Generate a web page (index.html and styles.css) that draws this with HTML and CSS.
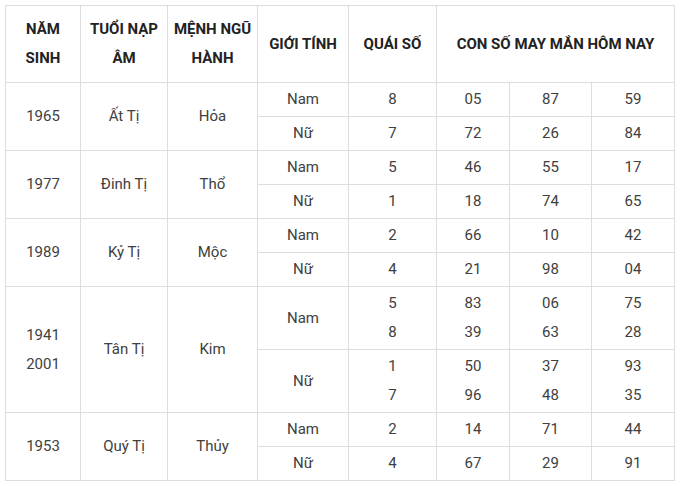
FILE: index.html
```html
<!DOCTYPE html>
<html lang="vi">
<head>
<meta charset="utf-8">
<link rel="stylesheet" href="styles.css">
</head>
<body>
<div class="wrap">
<table class="lucky">
  <colgroup>
    <col class="c1"><col class="c2"><col class="c3"><col class="c4"><col class="c5"><col class="c6"><col class="c7"><col class="c8">
  </colgroup>
  <thead>
    <tr>
      <th>NĂM<br>SINH</th>
      <th>TUỔI NẠP<br>ÂM</th>
      <th>MỆNH NGŨ<br>HÀNH</th>
      <th>GIỚI TÍNH</th>
      <th>QUÁI SỐ</th>
      <th colspan="3">CON SỐ MAY MẮN HÔM NAY</th>
    </tr>
  </thead>
  <tbody>
    <tr class="r1"><td rowspan="2">1965</td><td rowspan="2">Ất Tị</td><td rowspan="2">Hỏa</td><td>Nam</td><td>8</td><td>05</td><td>87</td><td>59</td></tr>
    <tr class="r1"><td>Nữ</td><td>7</td><td>72</td><td>26</td><td>84</td></tr>
    <tr class="r1"><td rowspan="2">1977</td><td rowspan="2">Đinh Tị</td><td rowspan="2">Thổ</td><td>Nam</td><td>5</td><td>46</td><td>55</td><td>17</td></tr>
    <tr class="r1"><td>Nữ</td><td>1</td><td>18</td><td>74</td><td>65</td></tr>
    <tr class="r1"><td rowspan="2">1989</td><td rowspan="2">Kỷ Tị</td><td rowspan="2">Mộc</td><td>Nam</td><td>2</td><td>66</td><td>10</td><td>42</td></tr>
    <tr class="r1"><td>Nữ</td><td>4</td><td>21</td><td>98</td><td>04</td></tr>
    <tr class="r2"><td rowspan="2">1941<br>2001</td><td rowspan="2">Tân Tị</td><td rowspan="2">Kim</td><td>Nam</td><td>5<br>8</td><td>83<br>39</td><td>06<br>63</td><td>75<br>28</td></tr>
    <tr class="r2"><td>Nữ</td><td>1<br>7</td><td>50<br>96</td><td>37<br>48</td><td>93<br>35</td></tr>
    <tr class="r1"><td rowspan="2">1953</td><td rowspan="2">Quý Tị</td><td rowspan="2">Thủy</td><td>Nam</td><td>2</td><td>14</td><td>71</td><td>44</td></tr>
    <tr class="r1"><td>Nữ</td><td>4</td><td>67</td><td>29</td><td>91</td></tr>
  </tbody>
</table>
</div>
</body>
</html>
```
FILE: styles.css
```css
html, body {
  margin: 0;
  padding: 0;
  background: #ffffff;
}
.wrap {
  padding: 5px 0 0 5px;
}
.lucky {
  border-collapse: collapse;
  table-layout: fixed;
  width: 669px;
  font-family: Roboto, "Liberation Sans", Arial, sans-serif;
  font-size: 15px;
  color: #404040;
}
.c1 { width: 75px; }
.c2 { width: 87px; }
.c3 { width: 90px; }
.c4 { width: 91px; }
.c5 { width: 88px; }
.c6 { width: 73px; }
.c7 { width: 82px; }
.c8 { width: 83px; }
.lucky th,
.lucky td {
  border: 1px solid #dddddd;
  text-align: center;
  vertical-align: middle;
  padding: 0 2px;
  line-height: 29px;
}
.lucky th {
  height: 76px;
  font-weight: 700;
  color: #222222;
  box-sizing: border-box;
}
.lucky thead tr { height: 77px; }
.r1 { height: 34px; }
.r2 { height: 63px; }
```
